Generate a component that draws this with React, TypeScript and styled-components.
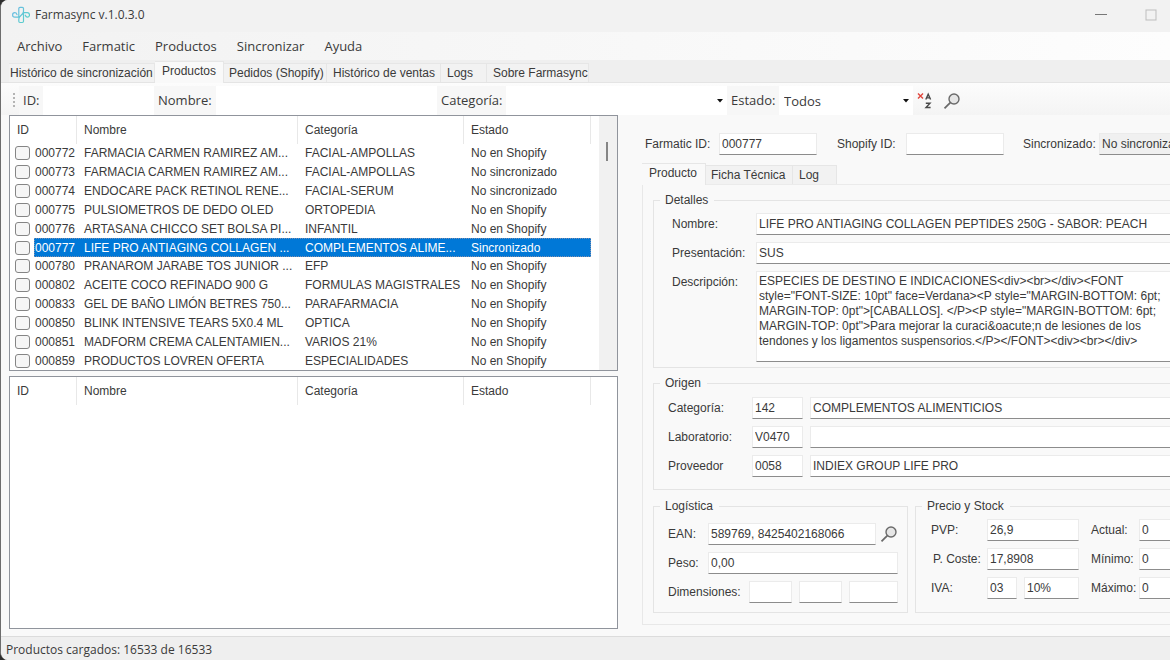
import React from "react";
import styled, { createGlobalStyle } from "styled-components";

const uiFont = `"Open Sans", "Noto Sans", sans-serif`;
const formFont = `"Liberation Sans", Arial, sans-serif`;

const GlobalStyle = createGlobalStyle`
  *, *::before, *::after { box-sizing: border-box; }
  body { margin: 0; background: #2e2e2e; color: #3a3a3a; font: 12px/16px ${formFont}; overflow: hidden; }
  button, input, select, textarea { font: inherit; color: inherit; margin: 0; border-radius: 0; }
`;

const Window = styled.div`
  display: flex;
  flex-direction: column;
  min-height: 100vh;
  overflow: hidden;
  border-left: 1px solid #6d6d6d;
  border-radius: 8px 0 0 8px;
  background: #f9f9f9;
`;

const TitleBar = styled.header`
  display: flex;
  align-items: center;
  height: 32px;
  padding: 0 0 2px 11px;
  background: #f2f2f2;
  font: 12px/20px ${uiFont};
`;

const Title = styled.h1`
  flex: 1;
  margin: 0 0 0 5px;
  font: inherit;
`;

const CaptionButton = styled.button`
  display: flex;
  align-items: center;
  justify-content: center;
  width: 50px;
  height: 28px;
  padding: 0;
  border: 0;
  background: none;
  &:last-child { width: 44px; padding-left: 6px; }
`;

const MenuBar = styled.nav`
  display: flex;
  align-items: center;
  height: 28px;
  padding-left: 8px;
  background: linear-gradient(90deg, #f2f2f2, #fdfdfd);
`;

const MenuItem = styled.button`
  padding: 0 8px;
  margin-right: 4px;
  border: 0;
  background: none;
  font: 13px/22px ${uiFont};
`;

const TabStrip = styled.div<{ $plain?: boolean }>`
  display: flex;
  align-items: flex-end;
  height: ${(p) => (p.$plain ? 22 : 23)}px;
  padding-left: ${(p) => (p.$plain ? 0 : 8)}px;
  border-bottom: 1px solid ${(p) => (p.$plain ? "#ebebeb" : "#e4e4e4")};
  background: ${(p) => (p.$plain ? "none" : "#efefef")};
`;

const Tab = styled.button<{ $width: number; $active?: boolean; $pad?: number }>`
  width: ${(p) => p.$width}px;
  height: ${(p) => (p.$active ? 22 : 19)}px;
  margin-bottom: ${(p) => (p.$active ? -1 : 0)}px;
  padding: 0 0 ${(p) => (p.$active ? 3 : 0)}px ${(p) => p.$pad ?? 6}px;
  border: 1px solid #e6e6e6;
  border-width: 1px 1px 0 0;
  background: ${(p) => (p.$active ? "#f9f9f9" : "#f2f2f2")};
  text-align: left;
  white-space: nowrap;
`;

const Toolbar = styled.form`
  display: flex;
  align-items: center;
  height: 32px;
  padding: 3px 0 0 11px;
  background: linear-gradient(#fcfcfc, #f4f4f4);
  font: 13px/20px ${uiFont};
`;

const ToolLabel = styled.label<{ $width: number }>`
  width: ${(p) => p.$width}px;
  height: 29px;
  padding-left: 4px;
  background: #f7f7f7;
  line-height: 28px;
  flex: none;
`;

const ToolInput = styled.input<{ $width: number }>`
  flex: 0 1 ${(p) => p.$width}px;
  min-width: 0;
  width: 0;
  height: 29px;
  padding: 0 4px;
  border: 0;
  background: #fff;
`;

const SelectBox = styled.span<{ $width: number }>`
  display: flex;
  align-items: center;
  flex: 0 1 ${(p) => p.$width}px;
  min-width: 0;
  height: 29px;
  background: #fff;
  svg { flex: none; margin-right: 4px; pointer-events: none; }
`;

const Select = styled.select`
  flex: 1;
  min-width: 0;
  height: 28px;
  padding: 0 0 0 5px;
  border: 0;
  appearance: none;
  background: none;
`;

const IconButton = styled.button`
  display: flex;
  align-items: center;
  justify-content: center;
  flex: none;
  width: 26px;
  height: 22px;
  padding: 0;
  border: 0;
  background: none;
`;

const Workspace = styled.main`
  flex: 1;
  display: grid;
  grid-template-columns: 609px minmax(0, 1fr);
  column-gap: 24px;
  padding-left: 8px;
`;

const Lists = styled.section`
  display: grid;
  grid-template-rows: 256fr 253fr;
  row-gap: 5px;
  padding-bottom: 7px;
`;

const ListFrame = styled.div`
  display: flex;
  border: 1px solid #90949c;
  background: #fff;
`;

const ListTable = styled.table`
  display: flex;
  flex-direction: column;
  flex: 0 0 581px;
`;

const rowColumns = "67px 221px 166px 127px";

const ListHead = styled.thead`
  display: block;
  tr { display: grid; grid-template-columns: ${rowColumns}; }
  th {
    height: 28px;
    padding: 0 0 0 7px;
    border-right: 1px solid #e8e8e8;
    font-weight: 400;
    line-height: 29px;
    text-align: left;
  }
`;

const ListBody = styled.tbody`
  flex: 1;
  display: grid;
  grid-auto-rows: minmax(18px, 1fr);
`;

const ListRow = styled.tr<{ $selected?: boolean }>`
  position: relative;
  display: grid;
  grid-template-columns: ${rowColumns};
  align-items: center;
  color: ${(p) => (p.$selected ? "#fff" : "inherit")};
  background: ${(p) => (p.$selected ? "linear-gradient(90deg, #fff 24px, #0078d7 24px)" : "none")};
  &::after {
    content: "";
    display: ${(p) => (p.$selected ? "block" : "none")};
    position: absolute;
    inset: 0 0 0 24px;
    border: 1px dotted #7f8fae;
    pointer-events: none;
  }
  td {
    padding: 0 0 0 7px;
    line-height: 18px;
    white-space: nowrap;
  }
  td:first-child { display: flex; align-items: center; padding: 0 0 0 5px; }
`;

const Check = styled.input`
  appearance: none;
  flex: none;
  width: 15px;
  height: 14px;
  margin: 0 5px 0 0;
  border: 1px solid #858585;
  border-radius: 3px;
  background: #f6f6f6;
`;

const ScrollTrack = styled.div`
  flex: 1;
  margin-left: 8px;
  padding: 26px 0 0 7px;
  background: #f1f1f1;
`;

const ScrollThumb = styled.div`
  width: 2px;
  height: 19px;
  background: #858585;
`;

const Details = styled.section`
  padding: 18px 0 11px;
`;

const Line = styled.div<{ $gap?: number }>`
  display: flex;
  align-items: flex-start;
  margin-bottom: ${(p) => p.$gap ?? 7}px;
  &:last-child { margin-bottom: 0; }
`;

const Label = styled.label<{ $width: number; $indent?: number }>`
  flex: none;
  width: ${(p) => p.$width}px;
  padding: 3px 0 0 ${(p) => p.$indent ?? 0}px;
  white-space: nowrap;
`;

const Field = styled.input<{ $width?: number; $after?: number; $open?: boolean }>`
  flex: ${(p) => (p.$width ? `0 0 ${p.$width}px` : "1 1 0")};
  width: ${(p) => p.$width ?? 0}px;
  min-width: 0;
  height: 22px;
  margin-right: ${(p) => p.$after ?? 0}px;
  padding: 0 0 1px 2px;
  border: 1px solid #ebebeb;
  border-bottom-color: #8c8c8c;
  border-right-width: ${(p) => (p.$open ? 0 : 1)}px;
  background: ${(p) => (p.readOnly ? "#f0f0f0" : "#fff")};
`;

const Memo = styled.textarea`
  flex: 1 1 0;
  min-width: 0;
  height: 91px;
  padding: 2px 0 0 2px;
  border: 1px solid #ebebeb;
  border-bottom-color: #8c8c8c;
  border-right: 0;
  background: #fff;
  line-height: 15px;
  white-space: pre;
  resize: none;
  overflow: hidden;
`;

const TabPanel = styled.div`
  padding: 7px 0 11px 10px;
  border: 1px solid #e8e8e8;
  border-width: 0 0 1px 1px;
`;

const Group = styled.fieldset<{ $closed?: boolean }>`
  min-width: 0;
  margin: 0 0 7px;
  padding: 0 0 0 6px;
  border: 1px solid #e4e4e4;
  border-right-width: ${(p) => (p.$closed ? 1 : 0)}px;
`;

const Legend = styled.legend`
  padding: 0 6px 0 5px;
`;

const GroupBody = styled.div<{ $pad: string }>`
  padding: ${(p) => p.$pad};
`;

const Pair = styled.div`
  display: grid;
  grid-template-columns: 255px minmax(0, 1fr);
  column-gap: 7px;
  margin-top: 8px;
  ${Group} { margin: 0; }
`;

const Status = styled.footer`
  height: 24px;
  padding-left: 5px;
  border-top: 1px solid #dcdcdc;
  background: #efefef;
  font: 12px/25px ${uiFont};
`;

const Logo = () => (
  <svg width="18" height="18" viewBox="0 0 18 18" fill="none" stroke="url(#logo-tint)" strokeWidth="1.2" strokeLinecap="round" aria-hidden="true">
    <defs>
      <linearGradient id="logo-tint" gradientUnits="userSpaceOnUse" x1="0" y1="2" x2="18" y2="16">
        <stop offset="0" stopColor="#6fb9e8" />
        <stop offset="1" stopColor="#55d3c4" />
      </linearGradient>
    </defs>
    <path d="M6.800 11V2.500a1.200 1.200 0 0 1 1.200-1.200h2.300a1.200 1.200 0 0 1 1.200 1.200V5.500C11.500 9 6.800 9.500 6.800 13v2.300a1.200 1.200 0 0 0 1.200 1.200h2.300a1.200 1.200 0 0 0 1.200-1.200V7" />
    <path d="M5 8.600C4.600 7.400 3.800 6.700 2.800 6.700a2.200 2.200 0 0 0 0 4.400H6.800M13.300 9.200c.4 1.200 1 1.900 2 1.900a2.200 2.200 0 0 0 0-4.400H11.500" />
  </svg>
);

const Magnifier = () => (
  <svg width="18" height="18" viewBox="0 0 18 18" fill="none" stroke="#6a6a6a" aria-hidden="true">
    <circle cx="11" cy="7" r="5" fill="#e6e6e6" strokeWidth="1.400" />
    <path d="M7.300 10.700 1.500 16.300" strokeWidth="1.800" />
  </svg>
);

const ClearSort = () => (
  <svg width="18" height="18" viewBox="0 0 18 18" fill="none" stroke="#4a4a4a" strokeWidth="1.400" aria-hidden="true">
    <path d="M1 1.500l5 5M6 1.500l-5 5" stroke="#e0453c" />
    <path d="M8.800 7.500l2.400-5.300 2.400 5.300M9.600 5.900h3.200M8.800 11.200h4.200l-4 4.300h4.600" />
  </svg>
);

const Caret = () => (
  <svg width="6" height="4" viewBox="0 0 6 4" aria-hidden="true">
    <path d="M0 0h6L3 3.500z" fill="#111" />
  </svg>
);

const products = [
  ["000772", "FARMACIA CARMEN RAMIREZ AM...", "FACIAL-AMPOLLAS", "No en Shopify"],
  ["000773", "FARMACIA CARMEN RAMIREZ AM...", "FACIAL-AMPOLLAS", "No sincronizado"],
  ["000774", "ENDOCARE PACK RETINOL RENE...", "FACIAL-SERUM", "No sincronizado"],
  ["000775", "PULSIOMETROS DE DEDO OLED", "ORTOPEDIA", "No en Shopify"],
  ["000776", "ARTASANA CHICCO SET BOLSA PI...", "INFANTIL", "No en Shopify"],
  ["000777", "LIFE PRO ANTIAGING COLLAGEN ...", "COMPLEMENTOS ALIME...", "Sincronizado"],
  ["000780", "PRANAROM JARABE TOS JUNIOR ...", "EFP", "No en Shopify"],
  ["000802", "ACEITE COCO REFINADO 900 G", "FORMULAS MAGISTRALES", "No en Shopify"],
  ["000833", "GEL DE BAÑO LIMÓN BETRES 750...", "PARAFARMACIA", "No en Shopify"],
  ["000850", "BLINK INTENSIVE TEARS 5X0.4 ML", "OPTICA", "No en Shopify"],
  ["000851", "MADFORM CREMA CALENTAMIEN...", "VARIOS 21%", "No en Shopify"],
  ["000859", "PRODUCTOS LOVREN OFERTA", "ESPECIALIDADES", "No en Shopify"],
];

const description = [
  "ESPECIES DE DESTINO E INDICACIONES<div><br></div><FONT",
  'style="FONT-SIZE: 10pt" face=Verdana><P style="MARGIN-BOTTOM: 6pt;',
  'MARGIN-TOP: 0pt">[CABALLOS]. </P><P style="MARGIN-BOTTOM: 6pt;',
  'MARGIN-TOP: 0pt">Para mejorar la curaci&oacute;n de lesiones de los',
  "tendones y los ligamentos suspensorios.</P></FONT><div><br></div>",
].join("\n");

const Head = () => (
  <ListHead>
    <tr>
      {["ID", "Nombre", "Categoría", "Estado"].map((h) => (
        <th key={h} scope="col">{h}</th>
      ))}
    </tr>
  </ListHead>
);

export default function App() {
  return (
    <>
      <GlobalStyle />
      <Window>
        <TitleBar>
          <Logo />
          <Title>Farmasync v.1.0.3.0</Title>
          <CaptionButton aria-label="Minimizar">
            <svg width="12" height="12" viewBox="0 0 12 12" aria-hidden="true"><path d="M0 5.500h12" stroke="#777" /></svg>
          </CaptionButton>
          <CaptionButton aria-label="Maximizar">
            <svg width="12" height="12" viewBox="0 0 12 12" aria-hidden="true"><rect x="1" y="1" width="10" height="10" fill="none" stroke="#bdbdbd" /></svg>
          </CaptionButton>
        </TitleBar>
        <MenuBar>
          {["Archivo", "Farmatic", "Productos", "Sincronizar", "Ayuda"].map((m) => (
            <MenuItem key={m}>{m}</MenuItem>
          ))}
        </MenuBar>
        <TabStrip role="tablist">
          <Tab role="tab" $width={146} $pad={1}>Histórico de sincronización</Tab>
          <Tab role="tab" $width={69} $pad={7} $active aria-selected>Productos</Tab>
          <Tab role="tab" $width={103} $pad={5}>Pedidos (Shopify)</Tab>
          <Tab role="tab" $width={114}>Histórico de ventas</Tab>
          <Tab role="tab" $width={46}>Logs</Tab>
          <Tab role="tab" $width={102}>Sobre Farmasync</Tab>
        </TabStrip>
        <Toolbar>
          <svg width="7" height="18" viewBox="0 0 7 18" aria-hidden="true">
            <path d="M1 1h2v2H1zM1 5h2v2H1zM1 9h2v2H1zM1 13h2v2H1z" fill="#b4b4b4" />
          </svg>
          <ToolLabel htmlFor="f-id" $width={24}>ID:</ToolLabel>
          <ToolInput id="f-id" $width={111} />
          <ToolLabel htmlFor="f-name" $width={62}>Nombre:</ToolLabel>
          <ToolInput id="f-name" $width={221} />
          <ToolLabel htmlFor="f-cat" $width={69}>Categoría:</ToolLabel>
          <SelectBox $width={221}>
            <Select id="f-cat"><option></option></Select>
            <Caret />
          </SelectBox>
          <ToolLabel htmlFor="f-state" $width={52}>Estado:</ToolLabel>
          <SelectBox $width={134}>
            <Select id="f-state"><option>Todos</option></Select>
            <Caret />
          </SelectBox>
          <IconButton type="button" aria-label="Quitar orden"><ClearSort /></IconButton>
          <IconButton type="button" aria-label="Buscar"><Magnifier /></IconButton>
        </Toolbar>
        <Workspace>
          <Lists>
            <ListFrame>
              <ListTable>
                <Head />
                <ListBody>
                  {products.map(([id, name, category, state]) => (
                    <ListRow key={id} $selected={id === "000777"}>
                      <td><Check type="checkbox" aria-label={id} />{id}</td>
                      <td>{name}</td>
                      <td>{category}</td>
                      <td>{state}</td>
                    </ListRow>
                  ))}
                </ListBody>
              </ListTable>
              <ScrollTrack><ScrollThumb /></ScrollTrack>
            </ListFrame>
            <ListFrame>
              <ListTable><Head /></ListTable>
            </ListFrame>
          </Lists>
          <Details>
            <Line $gap={8}>
              <Label htmlFor="d-fid" $width={77} $indent={3}>Farmatic ID:</Label>
              <Field id="d-fid" $width={98} $after={20} defaultValue="000777" />
              <Label htmlFor="d-sid" $width={69}>Shopify ID:</Label>
              <Field id="d-sid" $width={98} $after={19} />
              <Label htmlFor="d-sync" $width={76}>Sincronizado:</Label>
              <Field id="d-sync" readOnly $open defaultValue="No sincronizado" />
            </Line>
            <TabStrip role="tablist" $plain>
              <Tab role="tab" $width={64} $pad={7} $active aria-selected>Producto</Tab>
              <Tab role="tab" $width={87} $pad={5}>Ficha Técnica</Tab>
              <Tab role="tab" $width={44}>Log</Tab>
            </TabStrip>
            <TabPanel role="tabpanel">
              <Group>
                <Legend>Detalles</Legend>
                <GroupBody $pad="5px 0 5px 12px">
                  <Line>
                    <Label htmlFor="d-name" $width={84}>Nombre:</Label>
                    <Field id="d-name" $open defaultValue="LIFE PRO ANTIAGING COLLAGEN PEPTIDES 250G - SABOR: PEACH" />
                  </Line>
                  <Line>
                    <Label htmlFor="d-pres" $width={84}>Presentación:</Label>
                    <Field id="d-pres" $open defaultValue="SUS" />
                  </Line>
                  <Line>
                    <Label htmlFor="d-desc" $width={84}>Descripción:</Label>
                    <Memo id="d-desc" defaultValue={description} />
                  </Line>
                </GroupBody>
              </Group>
              <Group>
                <Legend>Origen</Legend>
                <GroupBody $pad="6px 0 12px 8px">
                  <Line>
                    <Label htmlFor="o-cat" $width={84}>Categoría:</Label>
                    <Field id="o-cat" $width={51} $after={7} defaultValue="142" />
                    <Field aria-label="Nombre de categoría" $open defaultValue="COMPLEMENTOS ALIMENTICIOS" />
                  </Line>
                  <Line>
                    <Label htmlFor="o-lab" $width={84}>Laboratorio:</Label>
                    <Field id="o-lab" $width={51} $after={7} defaultValue="V0470" />
                    <Field aria-label="Nombre de laboratorio" $open />
                  </Line>
                  <Line>
                    <Label htmlFor="o-prov" $width={84}>Proveedor</Label>
                    <Field id="o-prov" $width={51} $after={7} defaultValue="0058" />
                    <Field aria-label="Nombre de proveedor" $open defaultValue="INDIEX GROUP LIFE PRO" />
                  </Line>
                </GroupBody>
              </Group>
              <Pair>
                <Group $closed>
                  <Legend>Logística</Legend>
                  <GroupBody $pad="9px 9px 9px 8px">
                    <Line>
                      <Label htmlFor="l-ean" $width={40}>EAN:</Label>
                      <Field id="l-ean" $width={168} defaultValue="589769, 8425402168066" />
                      <IconButton type="button" aria-label="Buscar EAN"><Magnifier /></IconButton>
                    </Line>
                    <Line>
                      <Label htmlFor="l-peso" $width={40}>Peso:</Label>
                      <Field id="l-peso" defaultValue="0,00" />
                    </Line>
                    <Line>
                      <Label htmlFor="l-dim" $width={81}>Dimensiones:</Label>
                      <Field id="l-dim" $width={43} $after={7} />
                      <Field aria-label="Ancho" $width={43} $after={7} />
                      <Field aria-label="Alto" />
                    </Line>
                  </GroupBody>
                </Group>
                <Group>
                  <Legend>Precio y Stock</Legend>
                  <GroupBody $pad="5px 0 5px 9px">
                    <Line>
                      <Label htmlFor="p-pvp" $width={56}>PVP:</Label>
                      <Field id="p-pvp" $width={92} $after={12} defaultValue="26,9" />
                      <Label htmlFor="s-act" $width={48}>Actual:</Label>
                      <Field id="s-act" $open defaultValue="0" />
                    </Line>
                    <Line>
                      <Label htmlFor="p-cost" $width={56} $indent={2}>P. Coste:</Label>
                      <Field id="p-cost" $width={92} $after={12} defaultValue="17,8908" />
                      <Label htmlFor="s-min" $width={48}>Mínimo:</Label>
                      <Field id="s-min" $open defaultValue="0" />
                    </Line>
                    <Line>
                      <Label htmlFor="p-iva" $width={56}>IVA:</Label>
                      <Field id="p-iva" $width={30} $after={7} defaultValue="03" />
                      <Field aria-label="Tipo de IVA" $width={55} $after={12} defaultValue="10%" />
                      <Label htmlFor="s-max" $width={48}>Máximo:</Label>
                      <Field id="s-max" $open defaultValue="0" />
                    </Line>
                  </GroupBody>
                </Group>
              </Pair>
            </TabPanel>
          </Details>
        </Workspace>
        <Status>Productos cargados: 16533 de 16533</Status>
      </Window>
    </>
  );
}
